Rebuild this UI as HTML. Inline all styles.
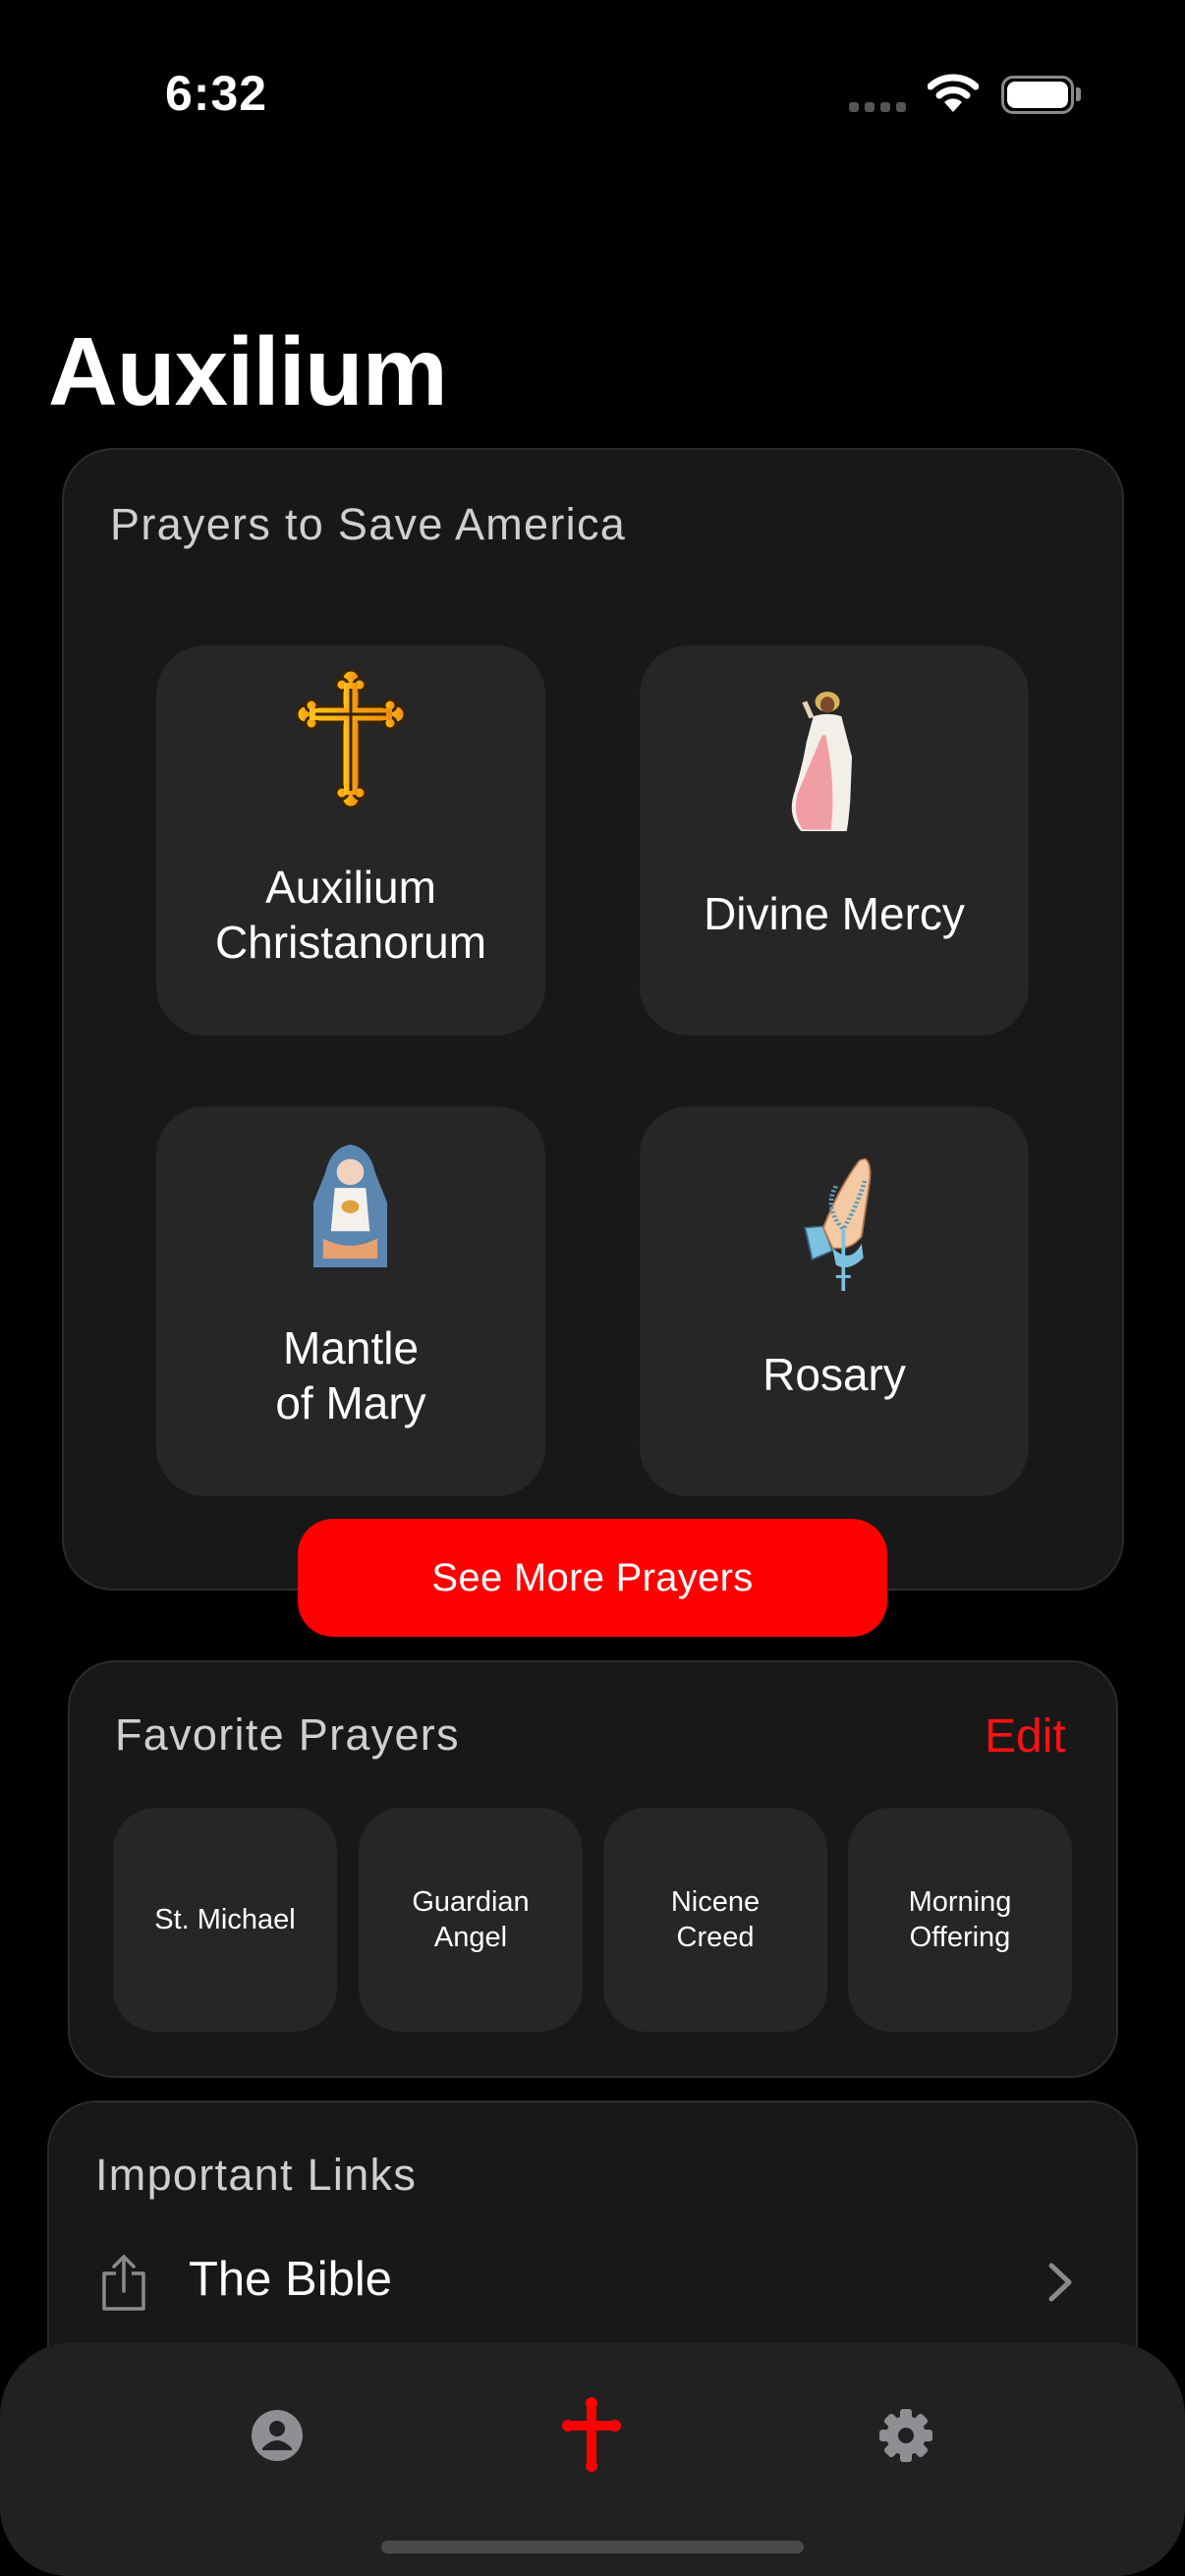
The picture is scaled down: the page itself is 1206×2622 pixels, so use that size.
<!DOCTYPE html>
<html><head><meta charset="utf-8"><style>
*{margin:0;padding:0;box-sizing:border-box}
body{width:1206px;height:2622px;background:#000;position:relative;overflow:hidden;font-family:"Liberation Sans",Helvetica,Arial,sans-serif;color:#fff}
.abs{position:absolute}
.card{position:absolute;background:#181818;border:2px solid #2b2b2b}
.tile{position:absolute;background:#262626;border-radius:50px;width:396px;height:397px}
.tl{position:absolute;left:0;width:100%;text-align:center;font-size:46px;line-height:56px;color:#fff}
.ft{position:absolute;top:1840px;width:228px;height:228px;background:#262626;border-radius:44px;display:flex;align-items:center;justify-content:center;text-align:center;font-size:29px;line-height:36px;color:#fff}
.hd{position:absolute;font-size:45px;color:#cfcfcf;letter-spacing:1.3px}
</style></head><body>
<!-- status bar -->
<div class="abs" style="left:168px;top:66px;font-size:50px;font-weight:bold;letter-spacing:1px">6:32</div>
<div class="abs" style="left:864px;top:104px;width:58px;height:10px">
<span class="abs" style="left:0;width:10px;height:10px;border-radius:3px;background:#555"></span>
<span class="abs" style="left:16px;width:10px;height:10px;border-radius:3px;background:#555"></span>
<span class="abs" style="left:32px;width:10px;height:10px;border-radius:3px;background:#555"></span>
<span class="abs" style="left:48px;width:10px;height:10px;border-radius:3px;background:#555"></span>
</div>
<svg class="abs" style="left:944px;top:74px" width="52" height="42" viewBox="0 0 52 42"><path d="M3 14 A34 34 0 0 1 49 14" stroke="#fff" stroke-width="7" fill="none" stroke-linecap="round"/><path d="M12 23 A21 21 0 0 1 40 23" stroke="#fff" stroke-width="7" fill="none" stroke-linecap="round"/><path d="M26 40 L17 30 A13 13 0 0 1 35 30 Z" fill="#fff"/></svg>
<div class="abs" style="left:1019px;top:77px;width:74px;height:39px;border:3px solid #8a8a8a;border-radius:12px"><div style="position:absolute;left:3px;top:3px;right:3px;bottom:3px;background:#fff;border-radius:8px"></div></div>
<div class="abs" style="left:1095px;top:89px;width:5px;height:14px;background:#8a8a8a;border-radius:0 3px 3px 0"></div>

<div class="abs" style="left:49px;top:322px;font-size:98px;font-weight:bold;letter-spacing:-1px">Auxilium</div>

<!-- card 1 -->
<div class="card" style="left:63px;top:456px;width:1081px;height:1163px;border-radius:52px"></div>
<div class="hd" style="left:112px;top:508px">Prayers to Save America</div>

<div class="tile" style="left:159px;top:657px">
 <svg class="abs" style="left:142px;top:24px" width="112" height="142" viewBox="0 0 112 142">
  <defs><linearGradient id="g" x1="0" x2="1"><stop offset="0" stop-color="#ffc21a"/><stop offset="1" stop-color="#f08d0c"/></linearGradient></defs>
  <g fill="url(#g)" stroke="#3a2400" stroke-width="3">
   <rect x="47" y="12" width="18" height="118"/>
   <rect x="12" y="38" width="88" height="16"/>
   <circle cx="56" cy="10" r="9"/><circle cx="47" cy="16" r="6"/><circle cx="65" cy="16" r="6"/>
   <circle cx="56" cy="132" r="9"/><circle cx="47" cy="126" r="6"/><circle cx="65" cy="126" r="6"/>
   <circle cx="10" cy="46" r="9"/><circle cx="16" cy="37" r="6"/><circle cx="16" cy="55" r="6"/>
   <circle cx="102" cy="46" r="9"/><circle cx="96" cy="37" r="6"/><circle cx="96" cy="55" r="6"/>
  </g>
  <rect x="49" y="14" width="14" height="114" fill="url(#g)"/>
  <rect x="14" y="40" width="84" height="12" fill="url(#g)"/>
  <path d="M56 20 L56 124 M20 46 L92 46" stroke="#3a2400" stroke-width="3"/>
 </svg>
 <div class="tl" style="top:218px">Auxilium<br>Christanorum</div>
</div>
<div class="tile" style="left:651px;top:657px">
 <svg class="abs" style="left:150px;top:47px" width="75" height="145" viewBox="0 0 84 196" preserveAspectRatio="none">
  <circle cx="46" cy="14" r="14" fill="#d7b35a"/>
  <ellipse cx="46" cy="18" rx="8" ry="11" fill="#7a4a2a"/>
  <path d="M30 34 Q46 28 62 34 L74 90 L72 150 Q70 180 68 192 L16 192 Q0 170 8 140 Q18 100 22 70 Z" fill="#f2efe8"/>
  <path d="M40 60 L12 140 Q6 170 18 190 L50 190 Q56 130 44 60Z" fill="#f07a88" opacity=".7"/>
  <path d="M28 36 L20 14" stroke="#e8d2b8" stroke-width="6"/>
 </svg>
 <div class="tl" style="top:245px">Divine Mercy</div>
</div>
<div class="tile" style="left:159px;top:1126px">
 <svg class="abs" style="left:160px;top:39px" width="75" height="125" viewBox="0 0 76 170" preserveAspectRatio="none">
  <path d="M38 0 Q58 4 64 40 L76 80 L76 170 L0 170 L0 80 L12 40 Q18 4 38 0Z" fill="#5a86b0"/>
  <ellipse cx="38" cy="38" rx="14" ry="18" fill="#f0d2c0"/>
  <path d="M22 60 L54 60 L58 120 L18 120Z" fill="#f4f1ea"/>
  <circle cx="38" cy="86" r="9" fill="#e0a040"/>
  <path d="M10 130 Q38 150 66 130 L66 158 L10 158Z" fill="#e8a070"/>
 </svg>
 <div class="tl" style="top:218px">Mantle<br>of Mary</div>
</div>
<div class="tile" style="left:651px;top:1126px">
 <svg class="abs" style="left:159px;top:52px" width="78" height="136" viewBox="0 0 84 186" preserveAspectRatio="none">
  <path d="M10 98 L30 96 L40 130 L18 142Z" fill="#7ec0e0" stroke="#3a6a88" stroke-width="2"/>
  <path d="M76 2 Q84 10 80 40 L72 110 Q60 130 40 126 L30 98 Q48 40 70 4Z" fill="#f4c9a4" stroke="#b07850" stroke-width="2"/>
  <path d="M40 126 Q60 150 72 120 L74 140 Q58 160 44 150Z" fill="#7ec0e0"/>
  <path d="M44 40 Q30 70 52 100 Q70 60 76 30" stroke="#5e9ab8" stroke-width="5" fill="none" stroke-dasharray="3 3"/>
  <path d="M52 100 L52 160 M44 166 L60 166 M52 156 L52 186" stroke="#7ec0e0" stroke-width="4"/>
 </svg>
 <div class="tl" style="top:245px">Rosary</div>
</div>

<div class="abs" style="left:303px;top:1546px;width:600px;height:120px;background:#ff0000;border-radius:36px;text-align:center;line-height:120px;font-size:40px;color:#fff;letter-spacing:0.3px">See More Prayers</div>

<!-- card 2 -->
<div class="card" style="left:69px;top:1690px;width:1069px;height:425px;border-radius:48px"></div>
<div class="hd" style="left:117px;top:1740px">Favorite Prayers</div>
<div class="abs" style="left:1002px;top:1740px;font-size:48px;color:#ff1010">Edit</div>
<div class="ft" style="left:115px">St. Michael</div>
<div class="ft" style="left:365px">Guardian<br>Angel</div>
<div class="ft" style="left:614px">Nicene<br>Creed</div>
<div class="ft" style="left:863px">Morning<br>Offering</div>

<!-- card 3 -->
<div class="card" style="left:48px;top:2138px;width:1110px;height:400px;border-radius:50px"></div>
<div class="hd" style="left:97px;top:2188px">Important Links</div>
<svg class="abs" style="left:102px;top:2294px" width="48" height="60" viewBox="0 0 48 60"><path d="M16 20 L4 20 L4 56 L44 56 L44 20 L32 20" stroke="#8a8a8a" stroke-width="3.5" fill="none" stroke-linejoin="round"/><path d="M24 38 L24 4 M14 13 L24 3 L34 13" stroke="#8a8a8a" stroke-width="3.5" fill="none" stroke-linecap="round"/></svg>
<div class="abs" style="left:192px;top:2292px;font-size:49px;color:#fff">The Bible</div>
<svg class="abs" style="left:1064px;top:2302px" width="30" height="42" viewBox="0 0 30 42"><path d="M6 4 L24 21 L6 38" stroke="#8a8a8a" stroke-width="5" fill="none" stroke-linecap="round" stroke-linejoin="round"/></svg>

<!-- tab bar -->
<div class="abs" style="left:0;top:2384px;width:1206px;height:238px;background:#212121;border-radius:75px 75px 70px 70px"></div>
<svg class="abs" style="left:255px;top:2452px" width="54" height="54" viewBox="0 0 54 54"><circle cx="27" cy="27" r="26" fill="#8e8e93"/><circle cx="27" cy="20" r="8" fill="#212121"/><path d="M12 40 Q27 24 42 40 L42 42 L12 42Z" fill="#212121"/></svg>
<svg class="abs" style="left:572px;top:2440px" width="60" height="76" viewBox="0 0 60 76"><g fill="#ff0000"><rect x="25" y="6" width="10" height="64"/><rect x="6" y="24" width="48" height="10"/><circle cx="30" cy="6" r="6"/><circle cx="30" cy="70" r="6"/><circle cx="6" cy="29" r="6"/><circle cx="54" cy="29" r="6"/><circle cx="30" cy="29" r="7"/></g></svg>
<svg class="abs" style="left:894px;top:2451px" width="56" height="56" viewBox="0 0 56 56"><g fill="#8e8e93" transform="translate(28 28)"><rect x="-6" y="-27" width="12" height="54" rx="3"/><rect x="-6" y="-27" width="12" height="54" rx="3" transform="rotate(45)"/><rect x="-6" y="-27" width="12" height="54" rx="3" transform="rotate(90)"/><rect x="-6" y="-27" width="12" height="54" rx="3" transform="rotate(135)"/><circle r="20"/></g><circle cx="28" cy="28" r="8" fill="#212121"/></svg>
<div class="abs" style="left:388px;top:2586px;width:430px;height:13px;background:#4a4a4a;border-radius:7px"></div>
</body></html>
